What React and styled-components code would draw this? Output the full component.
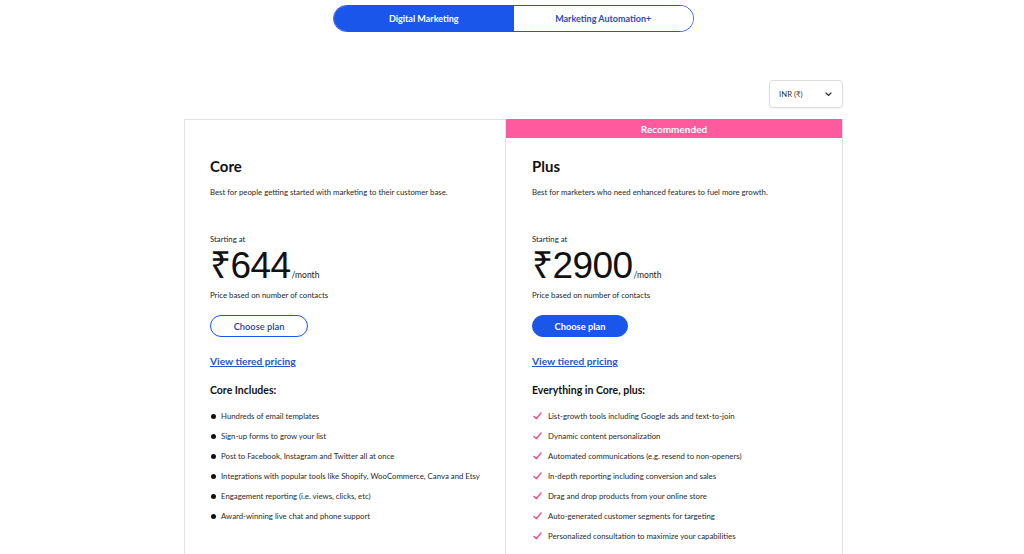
import styled, { createGlobalStyle } from 'styled-components'

const GlobalStyle = createGlobalStyle`
	html, body {
		margin: 0;
		padding: 0;
		background: #fff;
	}
	body {
		font-family: Lato, 'Noto Sans', 'DejaVu Sans', sans-serif;
		color: #1b1b1b;
	}
`

const Page = styled.div`
	width: 659px;
	margin-left: 184px;
	padding-top: 5px;
	display: flex;
	flex-direction: column;
`

const Toggle = styled.div`
	align-self: center;
	display: flex;
	width: 361px;
	height: 27px;
	border: 1px solid #1a56ea;
	border-radius: 14px;
	overflow: hidden;
	box-sizing: border-box;
`

const ToggleOption = styled.div`
	flex: 1;
	display: flex;
	align-items: center;
	justify-content: center;
	font-size: 9px;
	font-weight: 700;
	background: ${({ active }) => (active ? '#1a56ea' : '#fff')};
	color: ${({ active }) => (active ? '#fff' : '#2a4eb8')};
`

const CurrencyRow = styled.div`
	display: flex;
	justify-content: flex-end;
	margin-top: 48px;
`

const CurrencySelect = styled.div`
	width: 74px;
	height: 28px;
	box-sizing: border-box;
	border: 1px solid #dcdcdc;
	border-radius: 4px;
	display: flex;
	align-items: center;
	justify-content: space-between;
	padding: 0 10px 0 9px;
	font-size: 7.8px;
	color: #333;
	box-shadow: 0 1px 2px rgba(0, 0, 0, 0.05);
`

const Cards = styled.div`
	display: grid;
	grid-template-columns: 322px 337px;
	margin-top: 11px;
`

const Card = styled.div`
	border: 1px solid #e2e2e2;
	border-top: ${({ featured }) => (featured ? 'none' : '1px solid #e2e2e2')};
	border-left: ${({ featured }) => (featured ? 'none' : '1px solid #e2e2e2')};
	height: 460px;
	box-sizing: border-box;
	display: flex;
	flex-direction: column;
`

const Banner = styled.div`
	height: 19px;
	background: ${({ show }) => (show ? '#ff5a9d' : 'transparent')};
	color: #fff;
	font-size: 10px;
	font-weight: 700;
	display: flex;
	align-items: center;
	justify-content: center;
	margin-top: ${({ show }) => (show ? '0' : '-1px')};
`

const Body = styled.div`
	padding: 19px 20px 0 ${({ featured }) => (featured ? 26 : 25)}px;
	display: flex;
	flex-direction: column;
	align-items: flex-start;
`

const Title = styled.h2`
	margin: 0;
	font-size: 15px;
	line-height: 18px;
	font-weight: 700;
	color: #111;
`

const Desc = styled.p`
	margin: 12px 0 0;
	font-size: 7.8px;
	line-height: 10px;
	color: #2a2a2a;
`

const Small = styled.div`
	margin-top: ${({ mt }) => mt}px;
	font-size: 7.8px;
	line-height: 10px;
	color: #1f1f1f;
`

const Price = styled.div`
	margin-top: 8px;
	display: flex;
	align-items: baseline;
	height: 28px;
`

const Amount = styled.span`
	display: block;
	font-family: 'Liberation Sans', 'Noto Sans', sans-serif;
	font-size: 37px;
	line-height: 28px;
	height: 28px;
	font-weight: 400;
	color: #111;
	letter-spacing: -0.6px;
`

const Per = styled.span`
	font-size: 8.5px;
	line-height: 10px;
	color: #222;
	margin-left: 1px;
`

const PlanButton = styled.button`
	margin-top: 15px;
	width: ${({ primary }) => (primary ? '96px' : '98px')};
	height: 22px;
	border-radius: 11px;
	border: 1px solid #1a56ea;
	background: ${({ primary }) => (primary ? '#1a56ea' : '#fff')};
	color: ${({ primary }) => (primary ? '#fff' : '#1f3f9a')};
	font-family: inherit;
	font-size: 9.3px;
	font-weight: ${({ primary }) => (primary ? 700 : 600)};
	padding: 0;
`

const TierLink = styled.a`
	margin-top: 18px;
	font-size: 10.2px;
	line-height: 12px;
	font-weight: 700;
	color: #2a55c6;
	text-decoration: underline;
`

const ListHeading = styled.h3`
	margin: 16px 0 0;
	font-size: 10.5px;
	line-height: 14px;
	font-weight: 700;
	color: #111;
`

const List = styled.ul`
	list-style: none;
	margin: 14px 0 0;
	padding: 0;
	display: flex;
	flex-direction: column;
	gap: 10px;
`

const Item = styled.li`
	display: flex;
	align-items: center;
	font-size: 7.8px;
	line-height: 10px;
	color: #2a2a2a;
`

const Dot = styled.span`
	width: 5px;
	height: 5px;
	border-radius: 50%;
	background: #111;
	margin: 0 5px 0 1px;
	flex-shrink: 0;
`

const Check = () => (
	<svg width="9" height="8" viewBox="0 0 9 8" style={{ margin: '0 6px 0 1px', flexShrink: 0 }}>
		<path d="M1 4.5 L3.3 6.7 L8 1" fill="none" stroke="#ec5e98" strokeWidth="1.6" strokeLinecap="round" strokeLinejoin="round" />
	</svg>
)

const Chevron = () => (
	<svg width="7" height="5" viewBox="0 0 7 5">
		<path d="M1 1 L3.5 3.5 L6 1" fill="none" stroke="#333" strokeWidth="1.2" strokeLinecap="round" />
	</svg>
)

const plans = [
	{
		name: 'Core',
		desc: 'Best for people getting started with marketing to their customer base.',
		price: '₹644',
		heading: 'Core Includes:',
		features: [
			'Hundreds of email templates',
			'Sign-up forms to grow your list',
			'Post to Facebook, Instagram and Twitter all at once',
			'Integrations with popular tools like Shopify, WooCommerce, Canva and Etsy',
			'Engagement reporting (i.e. views, clicks, etc)',
			'Award-winning live chat and phone support',
		],
	},
	{
		name: 'Plus',
		featured: true,
		desc: 'Best for marketers who need enhanced features to fuel more growth.',
		price: '₹2900',
		heading: 'Everything in Core, plus:',
		features: [
			'List-growth tools including Google ads and text-to-join',
			'Dynamic content personalization',
			'Automated communications (e.g. resend to non-openers)',
			'In-depth reporting including conversion and sales',
			'Drag and drop products from your online store',
			'Auto-generated customer segments for targeting',
			'Personalized consultation to maximize your capabilities',
		],
	},
]

const App = () => {
	return (
		<>
			<GlobalStyle />
			<Page>
				<Toggle>
					<ToggleOption active>Digital Marketing</ToggleOption>
					<ToggleOption>Marketing Automation+</ToggleOption>
				</Toggle>
				<CurrencyRow>
					<CurrencySelect>
						INR (₹)
						<Chevron />
					</CurrencySelect>
				</CurrencyRow>
				<Cards>
					{plans.map((plan) => (
						<Card key={plan.name} featured={plan.featured}>
							<Banner show={plan.featured}>{plan.featured ? 'Recommended' : ''}</Banner>
							<Body featured={plan.featured}>
								<Title>{plan.name}</Title>
								<Desc>{plan.desc}</Desc>
								<Small mt={37}>Starting at</Small>
								<Price>
									<Amount>{plan.price}</Amount>
									<Per>/month</Per>
								</Price>
								<Small mt={10}>Price based on number of contacts</Small>
								<PlanButton primary={plan.featured}>Choose plan</PlanButton>
								<TierLink href="#">View tiered pricing</TierLink>
								<ListHeading>{plan.heading}</ListHeading>
								<List>
									{plan.features.map((f) => (
										<Item key={f}>
											{plan.featured ? <Check /> : <Dot />}
											{f}
										</Item>
									))}
								</List>
							</Body>
						</Card>
					))}
				</Cards>
			</Page>
		</>
	)
}

export default App
